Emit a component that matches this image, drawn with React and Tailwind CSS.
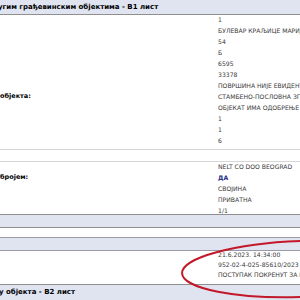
export default function App() {
  const building = [
    ['', '1'],
    ['', 'БУЛЕВАР КРАЉИЦЕ МАРИЈЕ'],
    ['', '54'],
    ['', 'Б'],
    ['', '6595'],
    ['', '33378'],
    ['', 'ПОВРШИНА НИЈЕ ЕВИДЕНТИРАНА'],
    ['објекта:', 'СТАМБЕНО-ПОСЛОВНА ЗГРАДА'],
    ['', 'ОБЈЕКАТ ИМА ОДОБРЕЊЕ ЗА УПОТРЕБУ'],
    ['', '1'],
    ['', '1'],
    ['', '6'],
  ]

  const owner = [
    ['', 'NELT CO DOO BEOGRAD'],
    ['бројем:', 'ДА'],
    ['', 'СВОЈИНА'],
    ['', 'ПРИВАТНА'],
    ['', '1/1'],
  ]

  const note = [
    '21.6.2023. 14:34:00',
    '952-02-4-025-85610/2023',
    'ПОСТУПАК ПОКРЕНУТ ЗА ПРОМЕНУ',
  ]

  const Row = ({ label, value, strong, tight }) => (
    <div className={`${tight ? 'h-[10px]' : 'h-[11px]'} flex items-center pb-[2px] whitespace-nowrap`}>
      <div className="w-[218px] shrink-0 text-[6.5px] font-bold text-black">{label}</div>
      <div className={strong ? 'text-[6.1px] font-bold text-[#1f2a8a]' : 'text-[6.1px] text-[#3a3a3a]'}>{value}</div>
    </div>
  )

  return (
    <div className="relative w-[300px] h-[300px] overflow-hidden bg-white font-['DejaVu_Sans',sans-serif]">
      {/* section header */}
      <div className="h-[15px] bg-[#dfe4f0] border-b border-[#8f8f8f] flex items-center whitespace-nowrap">
        <span className="-ml-[2px] text-[7px] font-bold text-black">угим грађевинским објектима - В1 лист</span>
      </div>

      <div>
        {building.map(([l, v], i) => (
          <Row key={i} label={l} value={v} />
        ))}
      </div>

      <div className="mt-[2px] border-t border-[#d6d6d6] h-[12px]" />
      <div className="border-t border-[#d6d6d6]">
        {owner.map(([l, v], i) => (
          <Row key={i} label={l} value={v} strong={v === 'ДА'} />
        ))}
      </div>

      <div className="-mt-[3px] border-t border-b border-[#8f8f8f] bg-[#dfe4f0] h-[14px]" />
      <div className="h-[9px]" />
      <div className="border-t border-b border-[#9a9aa8] bg-[#dfe4f0] h-[14px]" />
      <div>
        {note.map((v, i) => (
          <Row key={i} label="" value={v} tight />
        ))}
      </div>

      <div className="mt-[3px] border-t border-[#8f8f8f] bg-[#dfe4f0] h-[16px] flex items-center whitespace-nowrap">
        <span className="-ml-[1px] text-[7px] font-bold text-black">у објекта - В2 лист</span>
      </div>

      {/* red annotation ellipse */}
      <svg className="absolute inset-0 pointer-events-none" width="300" height="300" viewBox="0 0 300 300">
        <ellipse cx="302" cy="269" rx="120" ry="28" fill="none" stroke="#c3182a" strokeWidth="2" transform="rotate(-2 302 269)" />
      </svg>
    </div>
  )
}
